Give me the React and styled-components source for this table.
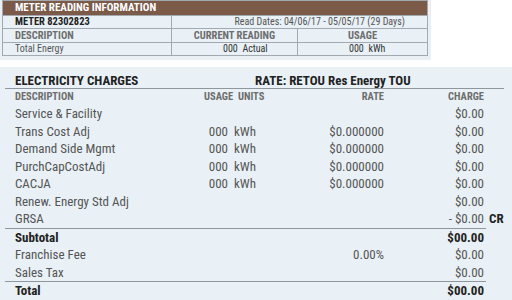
import React from "react";
import styled, { createGlobalStyle } from "styled-components";

const GlobalStyle = createGlobalStyle`
  html, body { margin: 0; padding: 0; background: #ffffff; }
  body {
    font-family: "Roboto Condensed", "Open Sans", sans-serif;
    color: #333;
  }
`;

const Page = styled.div`
  width: 512px;
  height: 300px;
  overflow: hidden;
`;

const MeterPanel = styled.div`
  width: 431px;
  height: 60px;
  box-sizing: border-box;
  padding: 0 4px 0 2px;
  background: #e9f1f6;
`;

const MeterTable = styled.table`
  width: 425px;
  border-collapse: collapse;
  border: 1px solid #a2aaaf;
  font-size: 10px;
  table-layout: fixed;
`;

const BrownHead = styled.th`
  background: #7b5a48;
  color: #ffffff;
  font-weight: 700;
  font-size: 11px;
  text-align: left;
  padding: 0 0 0 12px;
  height: 14px;
  line-height: 14px;
`;

const MeterCell = styled.td`
  border: 1px solid #a2aaaf;
  height: 12.4px;
  line-height: 12px;
  padding: 0 ${(p) => p.$pr || 0}px 0 ${(p) => p.$pl || 0}px;
  text-align: ${(p) => p.$align || "left"};
  font-weight: ${(p) => (p.$bold ? 700 : 400)};
  font-size: ${(p) => (p.$bold ? 10.5 : 10)}px;
  color: ${(p) => p.$color || "#555"};
  white-space: nowrap;
`;

const ChargesPanel = styled.div`
  margin-top: 7px;
  background: #e9f1f6;
  height: 233px;
  padding: 6px 0 0 5px;
  box-sizing: border-box;
`;

const TitleRow = styled.div`
  display: flex;
  width: 499px;
  box-sizing: border-box;
  padding-left: 10px;
  height: 16px;
  line-height: 16px;
  font-weight: 700;
  font-size: 13px;
  color: #222;
  border-bottom: 1.5px solid #8e979c;
`;

const TitleLeft = styled.div`
  width: 240px;
  flex: none;
`;

const Row = styled.div`
  display: grid;
  grid-template-columns: 189px 24px 72px 84px 100px 24px;
  padding-left: 10px;
  height: ${(p) => (p.$head ? 16 : 17.5)}px;
  line-height: ${(p) => (p.$head ? 16 : 17.5)}px;
  font-size: ${(p) => (p.$head ? 10.5 : 13)}px;
  font-weight: ${(p) => (p.$head || p.$bold ? 700 : 400)};
  color: ${(p) => (p.$head ? "#6d6d6d" : p.$bold ? "#222" : "#555")};
  white-space: nowrap;
`;

const Cell = styled.div`
  text-align: ${(p) => p.$align || "left"};
  padding-left: ${(p) => p.$pl || 0}px;
  grid-column: ${(p) => p.$span || "auto"};
`;

const Cr = styled.div`
  padding-left: 5px;
  font-weight: 700;
  color: #222;
`;

const Rule = styled.div`
  width: 481px;
  border-top: 1.5px solid #8e979c;
`;

const lines = [
  { d: "Service & Facility", c: "$0.00" },
  { d: "Trans Cost Adj", q: "000", u: "kWh", r: "$0.000000", c: "$0.00" },
  { d: "Demand Side Mgmt", q: "000", u: "kWh", r: "$0.000000", c: "$0.00" },
  { d: "PurchCapCostAdj", q: "000", u: "kWh", r: "$0.000000", c: "$0.00" },
  { d: "CACJA", q: "000", u: "kWh", r: "$0.000000", c: "$0.00" },
  { d: "Renew. Energy Std Adj", c: "$0.00" },
  { d: "GRSA", c: "- $0.00", cr: true },
];

function ChargeRow({ d, q, u, r, c, cr, bold }) {
  return (
    <Row $bold={bold}>
      <Cell>{d}</Cell>
      <Cell $align="right">{q}</Cell>
      <Cell $pl={6}>{u}</Cell>
      <Cell $align="right">{r}</Cell>
      <Cell $align="right">{c}</Cell>
      {cr ? <Cr>CR</Cr> : <Cell />}
    </Row>
  );
}

export default function App() {
  return (
    <Page>
      <GlobalStyle />
      <MeterPanel>
        <MeterTable>
          <colgroup>
            <col style={{ width: 169 }} />
            <col style={{ width: 126 }} />
            <col style={{ width: 130 }} />
          </colgroup>
          <thead>
            <tr>
              <BrownHead colSpan={3}>METER READING INFORMATION</BrownHead>
            </tr>
          </thead>
          <tbody>
            <tr>
              <MeterCell $pl={12} $bold $color="#222">
                METER 82302823
              </MeterCell>
              <MeterCell colSpan={2} $align="right" $pr={22}>
                Read Dates: 04/06/17 - 05/05/17 (29 Days)
              </MeterCell>
            </tr>
            <tr>
              <MeterCell $pl={12} $bold $color="#6d6d6d">
                DESCRIPTION
              </MeterCell>
              <MeterCell $align="center" $bold $color="#6d6d6d">
                CURRENT READING
              </MeterCell>
              <MeterCell $align="center" $bold $color="#6d6d6d">
                USAGE
              </MeterCell>
            </tr>
            <tr>
              <MeterCell $pl={12}>Total Energy</MeterCell>
              <MeterCell $pl={51} $color="#333">
                000&nbsp; Actual
              </MeterCell>
              <MeterCell $pl={51} $color="#333">
                000&nbsp; kWh
              </MeterCell>
            </tr>
          </tbody>
        </MeterTable>
      </MeterPanel>

      <ChargesPanel>
        <TitleRow>
          <TitleLeft>ELECTRICITY CHARGES</TitleLeft>
          <div>RATE: RETOU Res Energy TOU</div>
        </TitleRow>
        <Row $head>
          <Cell>DESCRIPTION</Cell>
          <Cell $span="2 / 4">USAGE&nbsp; UNITS</Cell>
          <Cell $align="right">RATE</Cell>
          <Cell $align="right">CHARGE</Cell>
          <Cell />
        </Row>
        {lines.map((l) => (
          <ChargeRow key={l.d} {...l} />
        ))}
        <Rule />
        <ChargeRow d="Subtotal" c="$00.00" bold />
        <ChargeRow d="Franchise Fee" r="0.00%" c="$0.00" />
        <ChargeRow d="Sales Tax" c="$0.00" />
        <Rule />
        <ChargeRow d="Total" c="$00.00" bold />
      </ChargesPanel>
    </Page>
  );
}
